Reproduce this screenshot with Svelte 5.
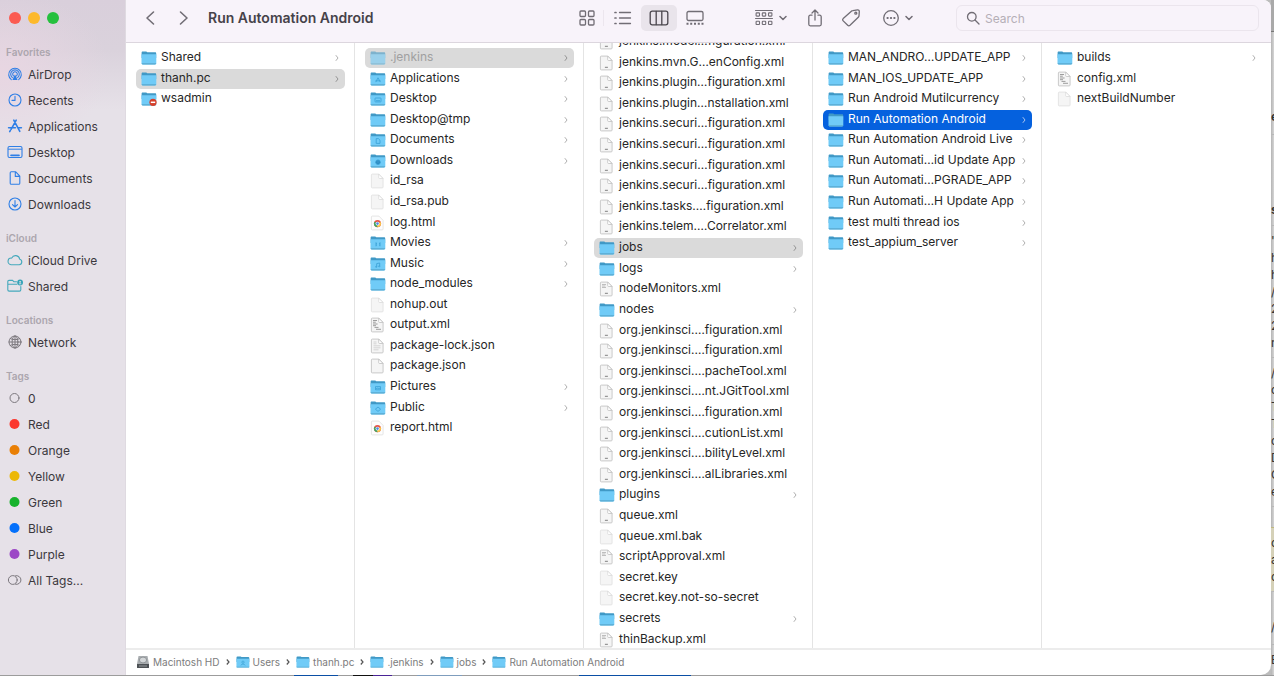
<script>
  import { onMount } from 'svelte';

  const sidebar = [
    {
      title: 'Favorites',
      items: [
        ['airdrop', 'AirDrop'],
        ['clock', 'Recents'],
        ['apps', 'Applications'],
        ['desktop', 'Desktop'],
        ['doc', 'Documents'],
        ['download', 'Downloads']
      ]
    },
    { title: 'iCloud', items: [['cloud', 'iCloud Drive'], ['sharedfolder', 'Shared']] },
    { title: 'Locations', items: [['globe', 'Network']] },
    {
      title: 'Tags',
      items: [
        ['ring', '0'],
        ['dot', 'Red', '#fb372e'],
        ['dot', 'Orange', '#e97f05'],
        ['dot', 'Yellow', '#ecb808'],
        ['dot', 'Green', '#17b22c'],
        ['dot', 'Blue', '#0470fb'],
        ['dot', 'Purple', '#9c48c6'],
        ['alltags', 'All Tags...']
      ]
    }
  ];

  const dir = (name, glyph = '') => ({ name, kind: 'folder', glyph });
  const file = (name, kind = 'blank') => ({ name, kind });

  const columns = [
    {
      selected: 'thanh.pc',
      rows: [dir('Shared'), dir('thanh.pc'), { name: 'wsadmin', kind: 'folder', glyph: 'denied', leaf: true }]
    },
    {
      selected: '.jenkins',
      rows: [
        { ...dir('.jenkins'), hidden: true },
        dir('Applications', 'apps'),
        dir('Desktop', 'desktop'),
        dir('Desktop@tmp'),
        dir('Documents', 'doc'),
        dir('Downloads', 'download'),
        file('id_rsa'),
        file('id_rsa.pub'),
        file('log.html', 'chrome'),
        dir('Movies', 'movie'),
        dir('Music', 'music'),
        dir('node_modules'),
        file('nohup.out'),
        file('output.xml', 'dense'),
        file('package-lock.json', 'lines'),
        file('package.json', 'outlined'),
        dir('Pictures', 'picture'),
        dir('Public', 'public'),
        file('report.html', 'chrome')
      ]
    },
    {
      selected: 'jobs',
      scroll: 16,
      rows: [
        file('jenkins.model…figuration.xml', 'xml'),
        file('jenkins.mvn.G…enConfig.xml', 'xml'),
        file('jenkins.plugin…figuration.xml', 'xml'),
        file('jenkins.plugin…nstallation.xml', 'xml'),
        file('jenkins.securi…figuration.xml', 'xml'),
        file('jenkins.securi…figuration.xml', 'xml'),
        file('jenkins.securi…figuration.xml', 'xml'),
        file('jenkins.securi…figuration.xml', 'xml'),
        file('jenkins.tasks.…figuration.xml', 'xml'),
        file('jenkins.telem.…Correlator.xml', 'xml'),
        dir('jobs'),
        dir('logs'),
        file('nodeMonitors.xml', 'xmltext'),
        dir('nodes'),
        file('org.jenkinsci.…figuration.xml', 'xml'),
        file('org.jenkinsci.…figuration.xml', 'xml'),
        file('org.jenkinsci.…pacheTool.xml', 'xml'),
        file('org.jenkinsci.…nt.JGitTool.xml', 'xml'),
        file('org.jenkinsci.…figuration.xml', 'xml'),
        file('org.jenkinsci.…cutionList.xml', 'xml'),
        file('org.jenkinsci.…bilityLevel.xml', 'xml'),
        file('org.jenkinsci.…alLibraries.xml', 'xml'),
        dir('plugins'),
        file('queue.xml', 'xml'),
        file('queue.xml.bak'),
        file('scriptApproval.xml', 'xmltext'),
        file('secret.key'),
        file('secret.key.not-so-secret'),
        dir('secrets'),
        file('thinBackup.xml', 'xmltext')
      ]
    },
    {
      selected: 'Run Automation Android',
      active: true,
      rows: [
        dir('MAN_ANDRO…UPDATE_APP'),
        dir('MAN_IOS_UPDATE_APP'),
        dir('Run Android Mutilcurrency'),
        dir('Run Automation Android'),
        dir('Run Automation Android Live'),
        dir('Run Automati…id Update App'),
        dir('Run Automati…PGRADE_APP'),
        dir('Run Automati…H Update App'),
        dir('test multi thread ios'),
        dir('test_appium_server')
      ]
    },
    { rows: [dir('builds'), file('config.xml', 'dense'), file('nextBuildNumber')] }
  ];

  const crumbs = [
    ['disk', 'Macintosh HD'],
    ['users', 'Users'],
    ['', 'thanh.pc'],
    ['', '.jenkins'],
    ['', 'jobs'],
    ['', 'Run Automation Android']
  ];

  const behind = [
    { cls: 'a', lines: ['e'] },
    { cls: 'b', lines: ['s'] },
    { cls: 'c', lines: ['"', 'h', 'h', '/', '2', '2', 'n'] },
    { cls: 'c', lines: ['/', 'c', 'T', 'T', 'o', 'D', 'C', 'e'] },
    { cls: 'd', lines: ['c', 'a', 'c'] },
    { cls: 'e', lines: ['/'] },
    { cls: 'f', lines: ['B'] }
  ];

  let lists = [];
  onMount(() => {
    columns.forEach((c, i) => {
      if (c.scroll) lists[i].scrollTop = c.scroll;
    });
  });
</script>

{#snippet sideIcon(kind, color)}
  <svg class="side-icon {kind}" viewBox="0 0 16 16" width="16" height="16" aria-hidden="true">
    {#if kind === 'airdrop'}
      <path d="M4.3 13.6a6.3 6.3 0 1 1 7.4 0M5.4 11.6a4.3 4.3 0 1 1 5.2 0M6.6 9.9a2.3 2.3 0 1 1 2.8 0" />
      <path d="M8 8.3 10.6 14H5.4z" class="fill" stroke="none" />
    {:else if kind === 'clock'}
      <circle cx="8" cy="8" r="6" /><path d="M8 4.2V8.4H5" />
    {:else if kind === 'apps'}
      <path d="M9.2 2.2 4.1 11.4M6.8 2.2 12.8 13.4M1.6 9.8H8.4M11.4 9.8h3M3.4 12.4l-.7 1.2" stroke-width="1.6" />
    {:else if kind === 'desktop'}
      <rect x="1" y="2.5" width="14" height="11" rx="1.5" /><path d="M1.5 5.2h13" stroke-width="1" /><path d="M4 11.4h8" stroke-width="1.6" />
    {:else if kind === 'doc'}
      <path d="M3.2 2.8c0-.7.4-1.1 1.1-1.1h4.2l4.3 4.5v7c0 .7-.4 1.1-1.1 1.1H4.3c-.7 0-1.1-.4-1.1-1.1zM8.3 2v4.4h4.3" />
    {:else if kind === 'download'}
      <circle cx="8" cy="8" r="6" /><path d="M8 4.6v6.2M5.5 8.6 8 11l2.5-2.4" />
    {:else if kind === 'cloud'}
      <path d="M4 12.7h8.2a2.8 2.8 0 0 0 .5-5.5 4.2 4.2 0 0 0-8-1.1A3.3 3.3 0 0 0 4 12.7z" />
    {:else if kind === 'sharedfolder'}
      <path d="M9.5 3.7H6.8L5.6 2.4H2C1.3 2.4.8 3 .8 3.6v8.2c0 .8.5 1.3 1.3 1.3h10.4c.8 0 1.3-.5 1.3-1.3V8.6M.8 6.2h9" />
      <circle cx="13.1" cy="4.5" r="2.9" class="fill" stroke="none" /><circle cx="13.1" cy="3.8" r=".9" fill="#e6e1e8" stroke="none" /><path d="M11.7 6.2c.3-1.200 2.500-1.200 2.800 0z" fill="#e6e1e8" stroke="none" />
    {:else if kind === 'globe'}
      <circle cx="8" cy="8" r="6" /><ellipse cx="8" cy="8" rx="2.9" ry="6" /><path d="M8 2v12M2 8h12M3.3 4.6c2.8 1.5 6.6 1.5 9.4 0M3.3 11.4c2.8-1.5 6.6-1.5 9.4 0" />
    {:else if kind === 'ring'}
      <circle cx="7.5" cy="8" r="4.5" />
    {:else if kind === 'dot'}
      <circle cx="7.5" cy="8" r="5" fill={color} stroke="none" />
    {:else if kind === 'alltags'}
      <circle cx="5.8" cy="8" r="4.4" /><path d="M8.6 3.7a4.4 4.4 0 1 1 0 8.6" />
    {/if}
  </svg>
{/snippet}

{#snippet folder(glyph)}
  <svg class="icon" viewBox="0 0 16 16" width="16" height="16" aria-hidden="true">
    <path d="M.6 2.700c0-.7.4-1.100 1.100-1.100h3.600l1 .6h7.800c.7 0 1.100.4 1.100 1.100V8H.6z" fill="#4099c6" />
    <path d="M.5 4.300h14.800v9c0 .7-.4 1.100-1.100 1.100H1.600c-.7 0-1.100-.4-1.100-1.100z" fill="#70cbf7" />
    <path d="M.6 13.300c.1.700.5 1.100 1 1.100h12.600c.5 0 .9-.4 1-1.100z" fill="#58a9cf" />
    <g fill="none" stroke="#3ea4d8" stroke-width=".9">
      {#if glyph === 'apps'}
        <path d="M8 6.800 5.800 11.100M8 6.800l2.300 4.300M5.400 9.800h5.200" />
      {:else if glyph === 'desktop'}
        <rect x="5" y="7" width="6" height="3.900" rx=".5" /><path d="M6 9.700h4" />
      {:else if glyph === 'doc'}
        <path d="M6.200 6.600h2.200l1.600 1.600v3.200H6.200z" />
      {:else if glyph === 'download'}
        <circle cx="8" cy="9.200" r="2.300" fill="#2a86bd" /><path d="M8 8v2.200" />
      {:else if glyph === 'movie'}
        <path d="M6 7.300v4M10 7.300v4M6 8.600h1M9 8.600h1M6 10.100h1M9 10.100h1" />
      {:else if glyph === 'music'}
        <path d="M6.700 10.800V7.600l3-.6v3.200" /><circle cx="6.200" cy="10.800" r=".6" /><circle cx="9.200" cy="10.300" r=".6" />
      {:else if glyph === 'picture'}
        <path d="M5.500 7.600h5v3.200h-5zM5.700 10.300l1.500-1.300 1 .9 1-1 1.200 1.400" />
      {:else if glyph === 'public'}
        <path d="m8 7 2.600 2.200L8 11.400 5.400 9.200z" />
      {:else if glyph === 'users'}
        <circle cx="8" cy="8.200" r="1.300" /><path d="M5.600 12c.2-2.200 4.600-2.200 4.800 0" />
      {/if}
    </g>
    {#if glyph === 'denied'}
      <circle cx="12" cy="11.300" r="3.600" fill="#d6402c" /><path d="M9.800 11.300h4.400" stroke="#fff" stroke-width="1.500" />
    {/if}
  </svg>
{/snippet}

{#snippet page(kind)}
  <svg class="icon" viewBox="0 0 16 16" width="16" height="16" aria-hidden="true">
    <path
      d="M1.400 2c0-.6.300-.9.900-.9h6.600l4.200 4.300v8.600c0 .6-.3.900-.9.900H2.300c-.6 0-.9-.3-.9-.9z"
      fill={kind === 'chrome' ? '#fdfdfd' : '#f5f5f5'}
      stroke={kind === 'blank' || kind === 'chrome' ? '#e2e2e2' : '#c4c4c4'}
      stroke-width=".9"
    />
    {#if kind === 'chrome'}
      <circle cx="7.500" cy="8.600" r="3.600" fill="#e5584c" />
      <path d="M7.500 8.600 4.400 6.800a3.600 3.600 0 0 0 3.100 5.400z" fill="#3fa863" />
      <path d="M7.500 8.600v3.600A3.600 3.600 0 0 0 10.700 7z" fill="#fbc94a" />
      <circle cx="7.500" cy="8.600" r="1.900" fill="#fff" /><circle cx="7.500" cy="8.600" r="1.300" fill="#4f86e6" />
    {:else}
      <path d="M8.700 1.100v3.500c0 .6.300.9.900.9h3.400z" fill="#fff" stroke={kind === 'blank' ? '#dadada' : '#c0c0c0'} stroke-width=".8" />
    {/if}
    {#if kind === 'xml' || kind === 'xmltext'}
      <path d="M5.900 12.300h3" stroke="#808080" stroke-width="1" />
    {/if}
    {#if kind === 'xmltext'}
      <path d="M3 3.500h4M3 5h3.400M3 6.500h4" stroke="#b8b8b8" stroke-width=".9" />
    {:else if kind === 'dense'}
      <path d="M3 3.500h4M3 5.200h2.800M3 7h4.600M3 8.700h3M4.500 10.400h4M6 12.300h5" stroke="#939393" stroke-width=".9" />
    {:else if kind === 'lines'}
      <path d="M3.500 4h3M3.500 5.800h3M3.500 7.800h7M3.500 9.800h7M3.500 11.800h5" stroke="#cacaca" stroke-width=".8" />
    {/if}
  </svg>
{/snippet}

{#snippet caret()}
  <svg class="caret" viewBox="0 0 8 6" width="8" height="6" aria-hidden="true"><path d="m1 1.500 3 3 3-3" /></svg>
{/snippet}

<div class="screen">
  <div class="window">
    <aside>
      <div class="lights">
        <button aria-label="Close" class="close"></button>
        <button aria-label="Minimize" class="minimize"></button>
        <button aria-label="Zoom" class="full"></button>
      </div>
      <nav aria-label="Sidebar">
        {#each sidebar as section}
          <h2>{section.title}</h2>
          <ul>
            {#each section.items as [kind, label, color]}
              <li><a href="#{label}">{@render sideIcon(kind, color)}{label}</a></li>
            {/each}
          </ul>
        {/each}
      </nav>
    </aside>

    <main>
      <header>
        <div class="history">
          <button aria-label="Back"><svg viewBox="0 0 10 16" width="10" height="16"><path d="M8.500 2 2 8l6.500 6" /></svg></button>
          <button aria-label="Forward"><svg viewBox="0 0 10 16" width="10" height="16"><path d="M1.500 2 8 8l-6.500 6" /></svg></button>
        </div>
        <h1>Run Automation Android</h1>
        <div class="views">
          <button aria-label="Icon view">
            <svg viewBox="0 0 16 16" width="16" height="16"><rect x="1" y="1" width="5.500" height="5.500" rx="1" /><rect x="9.500" y="1" width="5.500" height="5.500" rx="1" /><rect x="1" y="9.500" width="5.500" height="5.500" rx="1" /><rect x="9.500" y="9.500" width="5.500" height="5.500" rx="1" /></svg>
          </button>
          <button aria-label="List view">
            <svg viewBox="0 0 18 16" width="18" height="16"><path d="M5.500 2.500H16.500M5.500 8H16.500M5.500 13.500H16.500" /><path d="M1 2.500h1M1 8h1M1 13.500h1" stroke-width="1.700" /></svg>
          </button>
          <button aria-label="Column view" class="on" aria-pressed="true">
            <svg viewBox="0 0 20 16" width="20" height="16"><rect x="1.200" y="1.200" width="17.600" height="13.600" rx="2" /><path d="M7.200 1.500v13M12.800 1.500v13" /></svg>
          </button>
          <button aria-label="Gallery view">
            <svg viewBox="0 0 18 16" width="18" height="16"><rect x="1" y="1.500" width="16" height="9" rx="1.500" /><path d="M.5 13.800h2M4.200 13.800h2M8 13.800h2M11.800 13.800h2M15.500 13.800h2" stroke-width="1.900" stroke-linecap="butt" /></svg>
          </button>
        </div>
        <button class="group" aria-label="Group items">
          <svg viewBox="0 0 18 18" width="18" height="18"><path d="M.5 1.500h17M.5 9.500h17" stroke-width="1" /><g stroke-width="1.100"><rect x="1.100" y="3.900" width="3.400" height="3.200" rx=".6" /><rect x="7.300" y="3.900" width="3.400" height="3.200" rx=".6" /><rect x="13.500" y="3.900" width="3.400" height="3.200" rx=".6" /><rect x="1.100" y="12.300" width="3.400" height="3.200" rx=".6" /><rect x="7.300" y="12.300" width="3.400" height="3.200" rx=".6" /><rect x="13.500" y="12.300" width="3.400" height="3.200" rx=".6" /></g></svg>
          {@render caret()}
        </button>
        <button class="share" aria-label="Share">
          <svg viewBox="0 0 16 18" width="16" height="18"><path d="M5 6.200H3.300c-.9 0-1.500.6-1.500 1.500v7.600c0 .9.600 1.500 1.500 1.500h9.400c.9 0 1.500-.6 1.500-1.500V7.700c0-.9-.6-1.500-1.500-1.500H11M8 11V1.200M5 4l3-3 3 3" /></svg>
        </button>
        <button class="tag" aria-label="Edit tags">
          <svg viewBox="0 0 20 18" width="20" height="18"><path d="M11.800 1.700 16.600.9c1-.1 1.700.5 1.700 1.500l-.3 4.400c0 .6-.3 1-.7 1.500L9 16.300c-.8.700-1.600.7-2.300 0L2.200 11.900c-.7-.8-.7-1.600 0-2.300l7.900-7.200c.5-.4 1-.6 1.700-.7z" /><circle cx="14.800" cy="4.200" r="1" /></svg>
        </button>
        <button class="more" aria-label="More actions">
          <svg viewBox="0 0 18 18" width="18" height="18"><circle cx="9" cy="9" r="7.300" /><path d="M5.400 9h.4M8.800 9h.4M12.200 9h.4" stroke-width="1.900" /></svg>
          {@render caret()}
        </button>
        <label class="search">
          <svg viewBox="0 0 14 14" width="14" height="14" aria-hidden="true"><circle cx="5.800" cy="5.800" r="4.300" /><path d="m9 9 4 4" /></svg>
          <input type="search" placeholder="Search" aria-label="Search" />
        </label>
      </header>

      <div class="columns">
        {#each columns as column, i}
          <div class="column" bind:this={lists[i]}>
            <ul class:scrolled={column.scroll}>
              {#each column.rows as row}
                <li>
                  <button
                    class="row"
                    class:selected={row.name === column.selected}
                    class:active={column.active}
                    class:ghost={row.hidden}
                  >
                    {#if row.kind === 'folder'}{@render folder(row.glyph)}{:else}{@render page(row.kind)}{/if}
                    <span>{row.name}</span>
                    {#if row.kind === 'folder' && !row.leaf}
                      <svg class="chev" viewBox="0 0 6 8" width="6" height="8" aria-hidden="true"><path d="m1.800 1.200 2.200 2.800-2.200 2.800" /></svg>
                    {/if}
                  </button>
                </li>
              {/each}
            </ul>
          </div>
        {/each}
      </div>

      <footer>
        {#each crumbs as [kind, label], i}
          {#if i}
            <svg class="sep" viewBox="0 0 6 8" width="6" height="8" aria-hidden="true"><path d="m1.800 1.500 2.200 2.500-2.200 2.500" /></svg>
          {/if}
          <a href="#{label}">
            {#if kind === 'disk'}
              <svg class="icon" viewBox="0 0 14 14" width="14" height="14" aria-hidden="true"><path d="M2.500 1h9L13 9v3.500H1V9z" fill="#a9adb0" /><path d="M1 9h12v3.500c0 .4-.2.500-.5.500h-11c-.3 0-.5-.1-.5-.5z" fill="#4d5155" /><ellipse cx="7" cy="5" rx="3.600" ry="2.900" fill="#d3d6d8" stroke="#7d8185" stroke-width=".7" /><path d="M3 11h8" stroke="#9da1a4" stroke-width=".9" /></svg>
            {:else}
              {@render folder(kind)}
            {/if}
            {label}
          </a>
        {/each}
      </footer>
    </main>
  </div>

  <div class="behind" aria-hidden="true">
    <div class="bar"></div>
    {#each behind as block}
      <div class="block {block.cls}">
        {#each block.lines as line}<p>{line}</p>{/each}
      </div>
    {/each}
  </div>
  <div class="dock"></div>
</div>

<style>
  :global(body) {
    margin: 0;
  }
  .screen {
    display: grid;
    grid-template: minmax(0, 1fr) 1px / minmax(0, 1fr) 3px;
    height: 100vh;
    overflow: hidden;
    background: #bcbcbc;
    font-family: Inter, 'Liberation Sans', sans-serif;
    font-size: 12px;
    color: #262626;
  }
  ul,
  h1,
  h2,
  p {
    margin: 0;
    padding: 0;
    list-style: none;
  }
  button {
    border: 0;
    padding: 0;
    background: none;
    font: inherit;
    color: inherit;
  }
  a {
    color: inherit;
    text-decoration: none;
  }
  svg {
    flex: none;
    fill: none;
  }
  .window {
    display: grid;
    grid-template-columns: 126px minmax(0, 1fr);
    min-height: 0;
    border-radius: 0 8px 10px 0;
    overflow: hidden;
    background: #fff;
  }

  aside {
    box-sizing: border-box;
    border-right: 1px solid #dfdae1;
    background:
      radial-gradient(ellipse 110px 80px at 0 70px, #e8d6e2, transparent),
      linear-gradient(#d9cfdb 0, #dad2dc 50px, #e6e1e8 110px);
  }
  .lights {
    display: flex;
    gap: 7px;
    height: 19px;
    padding: 12px 9px 0;
  }
  .lights button {
    width: 12px;
    height: 12px;
    border-radius: 50%;
  }
  .close {
    background: #fb5b52;
  }
  .minimize {
    background: #fdb92c;
  }
  .full {
    background: #26c03e;
  }
  h2 {
    padding: 13px 0 0 6px;
    font-size: 10px;
    line-height: 17px;
    font-weight: 600;
    color: #aca6ae;
  }
  aside li a {
    display: flex;
    align-items: center;
    gap: 5px;
    height: 26px;
    padding-left: 7px;
    font-size: 12px;
    color: #3b383d;
  }
  .side-icon {
    stroke: #2f7fe6;
    stroke-width: 1.1;
    stroke-linecap: round;
    stroke-linejoin: round;
  }
  .side-icon .fill {
    fill: #2f7fe6;
  }
  .cloud,
  .sharedfolder {
    stroke: #45a9bc;
  }
  .sharedfolder .fill {
    fill: #35a3b8;
  }
  .globe,
  .ring,
  .alltags {
    stroke: #7c787e;
    stroke-width: 1;
  }

  main {
    display: flex;
    flex-direction: column;
    min-width: 0;
    min-height: 0;
  }
  header {
    display: flex;
    align-items: center;
    flex: none;
    height: 36px;
    padding: 0 12px 6px 19px;
    border-bottom: 1px solid #dcd6de;
    background: #f8f3fa;
    color: #716d75;
  }
  header svg {
    stroke: currentColor;
    stroke-width: 1.3;
    stroke-linecap: round;
    stroke-linejoin: round;
  }
  header button {
    display: flex;
    align-items: center;
    justify-content: center;
  }
  .history {
    display: flex;
    gap: 24px;
  }
  .history svg {
    stroke-width: 1.6;
  }
  h1 {
    flex: 1;
    min-width: 0;
    margin-left: 19px;
    overflow: hidden;
    white-space: nowrap;
    font-size: 14px;
    line-height: 20px;
    font-weight: 600;
    color: #464249;
  }
  .views {
    display: flex;
    margin-right: 41px;
  }
  .views button {
    width: 36px;
    height: 26px;
    border-radius: 5px;
  }
  .views button:first-child {
    border-radius: 0;
    background: linear-gradient(#ece6ee, #ece6ee) 34px center / 1px 16px no-repeat;
  }
  .views .on {
    background: #e9e4eb;
    color: #4a464d;
  }
  header .caret {
    stroke-width: 1.5;
  }
  .group {
    width: 34px;
    gap: 6px;
    margin-right: 19px;
  }
  .share {
    margin-right: 18px;
  }
  .tag {
    margin-right: 20px;
  }
  .more {
    width: 32px;
    gap: 5px;
    margin-right: 43px;
  }
  .search {
    box-sizing: border-box;
    display: flex;
    align-items: center;
    gap: 5px;
    width: 303px;
    height: 26px;
    padding: 0 9px;
    border: 1px solid #ebe5ed;
    border-radius: 6px;
  }
  .search input {
    flex: 1;
    min-width: 0;
    border: 0;
    padding: 0;
    outline: 0;
    background: none;
    font: inherit;
    font-size: 12px;
  }
  .search input::placeholder {
    color: #b5afb7;
  }

  .columns {
    flex: 1;
    min-height: 0;
    display: grid;
    grid-template-columns: repeat(5, minmax(0, 1fr));
    grid-template-rows: minmax(0, 1fr);
  }
  .column {
    border-right: 1px solid #e4e4e4;
    overflow: auto;
    scrollbar-width: none;
  }
  .column:last-child {
    border-right: 0;
  }
  .column ul {
    box-sizing: border-box;
    display: grid;
    grid-template-rows: repeat(29, 20px);
    align-content: space-between;
    height: 100%;
    padding: 5px 9px 4px 10px;
  }
  .column .scrolled {
    grid-template-rows: repeat(30, 20px);
    height: calc(100% + 22px);
  }
  .row {
    display: flex;
    align-items: center;
    gap: 4px;
    width: 100%;
    height: 20px;
    padding: 0 5px;
    border-radius: 5px;
    text-align: left;
    white-space: nowrap;
  }
  .row span {
    flex: 1;
    line-height: 16px;
    padding-bottom: 2px;
  }
  .chev {
    stroke: #b0b0b0;
    stroke-width: 1;
  }
  .selected {
    background: #dadada;
  }
  .selected .chev {
    stroke: #949494;
  }
  .selected.active {
    background: #0561de;
    color: #fff;
  }
  .selected.active .chev {
    stroke: #a9c4ee;
  }
  .ghost .icon {
    opacity: 0.6;
  }
  .ghost span {
    color: #a0a0a0;
  }

  footer {
    display: flex;
    align-items: center;
    flex: none;
    gap: 5px;
    height: 23px;
    padding: 0 0 2px 10px;
    border-top: 2px solid #ececec;
    font-size: 10px;
    color: #7c7c7c;
    white-space: nowrap;
  }
  footer a {
    display: flex;
    align-items: center;
    gap: 3px;
  }
  footer .icon {
    width: 14px;
    height: 14px;
  }
  .sep {
    stroke: #555;
    stroke-width: 1.2;
  }

  .behind {
    min-height: 0;
    overflow: hidden;
    background: linear-gradient(90deg, #b4b4b4, #d6d6d6);
    font-size: 12px;
    color: #333;
  }
  .bar {
    height: 31px;
    background: #a9a9a9;
    border-bottom: 1px solid #777;
  }
  .behind p {
    line-height: 17px;
  }
  .block {
    border-bottom: 1px solid #b8b8b8;
  }
  .a {
    padding: 76px 0 9px;
    font-weight: 700;
  }
  .b {
    padding: 66px 0 7px;
    font-weight: 700;
  }
  .c {
    padding: 6px 0;
  }
  .d {
    margin-top: 20px;
    padding: 6px 0;
    background: #d5d1b8;
    border-top: 1px solid #c0b880;
  }
  .e {
    padding: 26px 0 9px;
  }
  .f {
    padding: 6px 0;
    border: 0;
  }
  .dock {
    grid-column: 1 / -1;
    background: linear-gradient(
      90deg,
      #9c9c9c 294px,
      #0b4fa5 294px 338px,
      #9c9c9c 338px 353px,
      #111 353px 373px,
      #4a2496 373px 392px,
      #9c9c9c 392px 417px,
      #7f9dbd 417px 462px,
      #9c9c9c 462px 579px,
      #0b4fa5 579px 691px,
      #9c9c9c 691px
    );
  }
</style>
